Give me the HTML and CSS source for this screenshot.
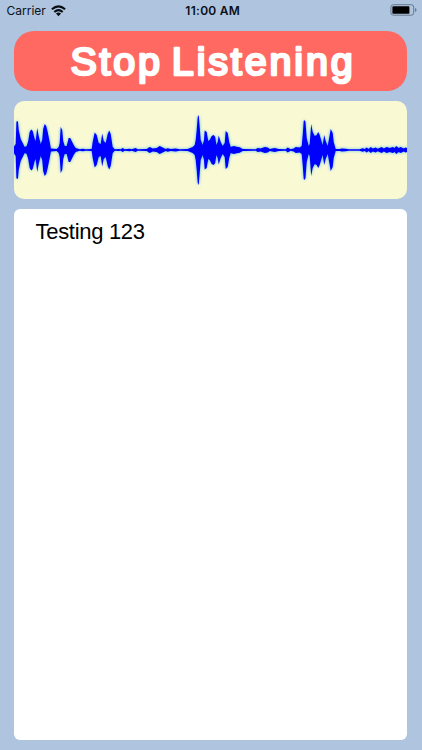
FILE: index.html
```
<!DOCTYPE html>
<html lang="en">
<head>
<meta charset="utf-8">
<title>Listening</title>
<link rel="stylesheet" href="styles.css">
</head>
<body>
<header class="status">
  <div class="carrier"><span>Carrier</span>
    <svg class="wifi" width="15" height="12" viewBox="0 0 15 12" fill="none" stroke="#070c12" stroke-width="2">
      <path d="M.9 4.3Q7.5-1.6 14.1 4.3"/><path d="M3.3 7Q7.5 3.2 11.7 7"/><path d="M5 8.6Q7.5 6.6 10 8.6L7.5 11.2Z" fill="#070c12" stroke="none"/>
    </svg>
  </div>
  <time class="clock">11:00 AM</time>
  <svg class="battery" width="27" height="12" viewBox="0 0 27 12">
    <rect x=".9" y=".7" width="22.8" height="10.5" rx="2.4" fill="none" stroke="#68798f" stroke-width="1"/>
    <rect x="2.4" y="2.2" width="17" height="7.5" rx=".8" fill="#000"/>
    <path d="M25 4.1Q26.6 4.8 26.6 6T25 7.9Z" fill="#68798f"/>
  </svg>
</header>
<main class="screen">
  <button class="listen">
    <svg width="393" height="60" viewBox="14 31 393 60"><text class="label"><tspan x="70.5" y="75.2" textLength="89.5" lengthAdjust="spacing">Stop</tspan> <tspan x="171.8" y="75.2" textLength="181" lengthAdjust="spacing">Listening</tspan></text></svg>
  </button>
  <section class="wave">
    <svg width="393" height="98" viewBox="14.3 -49 393 98">
      <defs><path id="half" d="M14 0V-3L16-6 16.7-28Q17.6-30 18.3-28L19-20 21-11 23-7 25-3 27-4 28.5-9 30-18 31.5-20.5 33-19 35-11 36-9 37.5-22 39-14 41-6 42.5-10 43.5-21 45-26 46.5-24 48-18 50-8 51.2-1.5 57-1 59-3 60-7 61-23 62.5-20 63.5-9 65-4 67-4 69-12 70.5-12 72-9 74-5 76-2 80-.8 83-1.2 86-.8 92-1 93-8 95-17.5 97-15 99-7 101-6 102.5-16.5 104-9 106-7 108-16 109.5-19.5 111-16 113-3 115-.8 119-1 121-.8 123-2 125-.8 130-1.3 132-.7 136-1.9 138-.8 147-1 150-3 153-1.5 157-2 160-4 163-2.5 166-1 168-1.8 171-1 176-1.6 180-.8 188-1 193-3 195-5 196-10 197-20 198-33 199-35 200-23 201-10 203-5 204.3-10 205-19.5 207-18 208.5-9 210-10 212-14 214-15 215.5-13 216.7-5 218-8 219-14.5 221-8 223-4 225-7 226-19 228-17 229.5-8 231-3 234-4 237-3.3 240-2.8 243-1 256-.8 258-2 261-1.5 265-3 268-2.5 270-1 275-2 279-1 286-.8 288-2.5 291-.8 294-1.5 296-3 300-2.5 302-4 303-15 304-29Q305-31 305.8-28L307-12 309-4 310-6 311.5-26 313-18 315-14 317-15 318.5-18 320-15 322-8 323-5 324.5-15 326-9 328-4 330-15 331-21 333-17 334-8 336-1 340-1 342-1.6 346-1.2 349-.7 360-.8 363-1.8 365-1 367-2.5 369-1 371-3 373-1.6 376-2.6 378-1.3 382-3 384-1.5 387-3 390-2 393-3 395-2 396.5-4 399-2 401-3 404-1.5 406-2.5 407.5-2V0Z"/></defs>
      <g class="trace"><use href="#half"/><use href="#half" transform="scale(1 -1)"/></g>
    </svg>
  </section>
  <section class="transcript">Testing 123</section>
</main>
</body>
</html>
```
FILE: styles.css
```
* { box-sizing: border-box; }
body {
  margin: 0;
  height: 750px;
  display: flex;
  flex-direction: column;
  background: #aec4df;
  font-family: "Liberation Sans", Arial, sans-serif;
  overflow: hidden;
}
.status {
  height: 31px;
  padding: 4px 5px 0 6.5px;
  display: grid;
  grid-template-columns: 1fr auto 1fr;
  align-items: start;
  color: #0a1018;
  font: 12px/14px Inter, sans-serif;
}
.carrier { display: flex; gap: 5px; letter-spacing: 0; }
.wifi { margin-top: 1px; }
.clock { font-weight: 600; letter-spacing: .28px; padding-left: 2px; }
.battery { justify-self: end; }
.screen {
  flex: 1;
  padding: 0 15px 10px 14px;
  display: flex;
  flex-direction: column;
}
.listen {
  height: 60px;
  padding: 0;
  border: 0;
  border-radius: 20px;
  background: #ff6961;
}
.listen svg, .wave svg { display: block; }
.label {
  font: 39.5px "Liberation Sans", Arial, sans-serif;
  fill: #fff;
  stroke: #fff;
  stroke-width: 2.6px;
  stroke-linejoin: round;
}
.wave {
  height: 98px;
  margin: 10px 0;
  border-radius: 10px;
  background: #f9f9d4;
  overflow: hidden;
}
.trace {
  fill: #00f;
  filter: drop-shadow(0 0 1.5px #42b8e8);
}
.transcript {
  flex: 1;
  padding: 10px 21.5px;
  border-radius: 6px;
  background: #fff;
  color: #000;
  font-size: 22px;
  letter-spacing: -.3px;
  line-height: 25px;
}
```
